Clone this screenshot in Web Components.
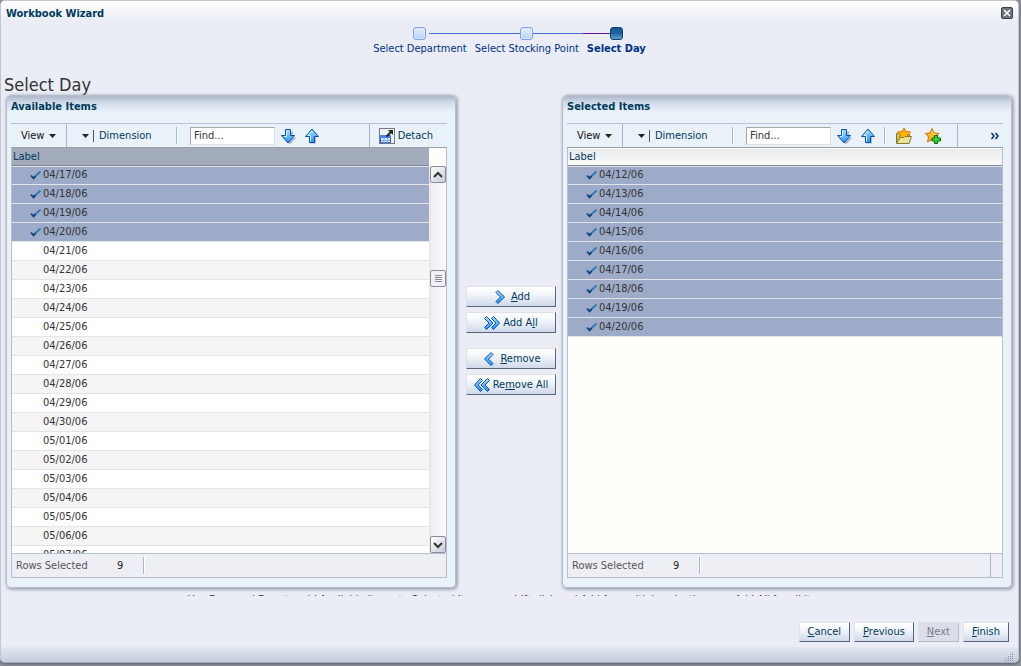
<!DOCTYPE html>
<html lang="en">
<head>
<meta charset="utf-8">
<title>Workbook Wizard</title>
<style>
  html, body { height: 100%; margin: 0; }
  body {
    background: #8e939c;
    font: 11px/14px "DejaVu Sans Condensed", "DejaVu Sans", sans-serif;
    color: #333;
    overflow: hidden;
  }
</style>
</head>
<body>
<wizard-dialog heading="Workbook Wizard" page="Select Day">
  <wizard-train slot="train">
    <wizard-step>Select Department</wizard-step>
    <wizard-step>Select Stocking Point</wizard-step>
    <wizard-step current>Select Day</wizard-step>
  </wizard-train>

  <item-panel slot="content" heading="Available Items" dates="04/17/06*,04/18/06*,04/19/06*,04/20/06*,04/21/06,04/22/06,04/23/06,04/24/06,04/25/06,04/26/06,04/27/06,04/28/06,04/29/06,04/30/06,05/01/06,05/02/06,05/03/06,05/04/06,05/05/06,05/06/06,05/07/06" scroll></item-panel>
  <shuttle-buttons slot="content"></shuttle-buttons>
  <item-panel slot="content" heading="Selected Items" dates="04/12/06*,04/13/06*,04/14/06*,04/15/06*,04/16/06*,04/17/06*,04/18/06*,04/19/06*,04/20/06*" favorites></item-panel>

  <span slot="hint">Use Drag and Drop to add Available Items to Selected Items use shift click and Add for multiple selection; use Add All for all items</span>

  <push-button slot="actions"><u>C</u>ancel</push-button>
  <push-button slot="actions"><u>P</u>revious</push-button>
  <push-button slot="actions" disabled><u>N</u>ext</push-button>
  <push-button slot="actions"><u>F</u>inish</push-button>
</wizard-dialog>

<script>
const define = (name, html, setup) => {
  const template = document.createElement('template');
  template.innerHTML = html;
  customElements.define(name, class extends HTMLElement {
    constructor() {
      super();
      this.attachShadow({ mode: 'open' }).append(template.content.cloneNode(true));
    }
    connectedCallback() {
      if (setup && !this.ready) { this.ready = true; setup(this, this.shadowRoot); }
    }
  });
};

const ICONS = {
  down: `<path d="M6 2.5h6v6h3.500L9 15.500 2.500 8.500H6z" transform="translate(1 1)" fill="#8a93a5" opacity=".6"/>
    <path d="M5.500 1.500h5v6h4L8 15 1.500 7.500h4z" fill="url(#g)" stroke="#0b4fb0"/><path d="M6.500 2.500v6h-2.500" fill="none" stroke="#d9f2ff"/>`,
  up: `<path d="M6 15.500h6v-6.500h3L9 2 3 9h3z" fill="#8a93a5" opacity=".6"/>
    <path d="M5.500 14.500h5v-6h4L8 1 1.500 8.500h4z" fill="url(#g)" stroke="#0b4fb0"/><path d="M6.500 13.500v-6h-2.500L8 3" fill="none" stroke="#d9f2ff"/>`,
  detach: `<rect x=".5" y=".5" width="15" height="15" fill="#eef3fb" stroke="#000" stroke-dasharray="1 1"/>
    <rect x="1.500" y="7.500" width="10" height="7" fill="#e8f1ff" stroke="#2d5fd0"/><path d="M1 7h11v3H1z" fill="#4f7fe8"/>
    <path d="M5 10v5M8.500 10v5M2 12.500h9" stroke="#7ba5f5"/><path d="M7.500 8.500l5-5" stroke="#222" stroke-width="2"/><path d="M9 2h5v5z" fill="#222"/>`,
  folder: `<path d="M.5 15V5.500l1.500-1h4l1.500 2h6V15z" fill="#c9bd55" stroke="#857a25"/>
    <path d="M8 0l2 3.500 4.500.5-3 3 1 4.500L8 9.500l-4.500 2L4.500 7 1.500 4 6 3.500z" fill="#ffb400" stroke="#e07a00"/>
    <path d="M.5 15.500l3.500-6h4l1-1h6.500l-2.500 7z" fill="#e9e29a" stroke="#857a25"/>`,
  star: `<path d="M7 .5l2 4.500 5 .5-3.500 3.500 1 5L7 11.500 2.500 14l1-5L.5 5.500 5 5z" fill="#ffb81c" stroke="#d96c00"/>
    <path d="M7 3l1 3 3 .5" fill="none" stroke="#ffe58a"/>
    <path d="M9.500 7.500h3v2.500h3v3h-3v2.500h-3V13H7v-3h2.500z" fill="#3fd12f" stroke="#056b05"/>`,
  right: `<path d="M4 3.500l2-2L12.500 8 6 14.500l-2-2L8.500 8z" fill="url(#g)" stroke="#0b4fb0"/>`,
  left: `<path d="M12 3.500l-2-2L3.500 8l6.500 6.500 2-2L7.500 8z" fill="url(#g)" stroke="#0b4fb0"/>`,
  rights: `<path d="M.5 3.500l2-2L9 8l-6.500 6.500-2-2L5 8zM7.500 3.500l2-2L15.500 8l-6 6.500-2-2L12 8z" fill="url(#g)" stroke="#0b4fb0"/>`,
  lefts: `<path d="M15.500 3.500l-2-2L7 8l6.500 6.500 2-2L11 8zM8.500 3.500l-2-2L.5 8l6 6.500 2-2L4 8z" fill="url(#g)" stroke="#0b4fb0"/>`,
  more: `<path d="M4.500 5L7 8l-2.500 3M8.500 5L11 8l-2.500 3" fill="none" stroke="#0a2a7a" stroke-width="1.500"/>`,
  check: `<path d="M6.500 11L13.500 4.500" fill="none" stroke="#2f78b8" stroke-width="1.800"/><path d="M4 8.500l2.500 2.800 2-2.200" fill="none" stroke="#0e4377" stroke-width="1.800"/>`,
  chevup: `<path d="M4 10l4-4 4 4" fill="none" stroke="#333" stroke-width="2"/>`,
  chevdown: `<path d="M4 6l4 4 4-4" fill="none" stroke="#333" stroke-width="2"/>`,
  grip: `<path d="M4 4.500h7M4 6.500h7M4 8.500h7M4 10.500h7" stroke="#8a8a94"/>`,
  caret: `<path d="M5 6h7L8.500 10z" fill="#222"/>`
};

define('ui-icon', `
  <style>:host { display: block; width: 16px; height: 16px; flex: none; } svg { display: block; }</style>
  <svg width="16" height="16" viewBox="0 0 16 16" aria-hidden="true"></svg>`,
  (host, root) => {
    root.querySelector('svg').innerHTML = `<defs><linearGradient id="g" x1="0" y1="0" x2="0" y2="1">
      <stop offset="0" stop-color="#a8e0ff"/><stop offset="1" stop-color="#1f93f2"/></linearGradient></defs>` + ICONS[host.getAttribute('name')];
  });

define('push-button', `
  <style>
    :host { display: block; }
    button {
      box-sizing: border-box; width: 100%; height: var(--button-height, 20px); padding: 0 8px;
      display: flex; align-items: center; justify-content: center; gap: 3px;
      font: inherit; color: #003a5c; white-space: nowrap;
      background: linear-gradient(#fff, #f4f7fb 35%, #cfd9ea);
      border: 1px solid; border-color: #dfe1e6 #59637a #59637a #dfe1e6;
    }
    button:disabled { color: #777c8c; background: #dcdfe9; border-color: #e2e4ec #b8bcc9 #b8bcc9 #e2e4ec; }
  </style>
  <button type="button"><slot name="icon"></slot><span><slot></slot></span></button>`,
  (host, root) => { root.querySelector('button').disabled = host.hasAttribute('disabled'); });

define('wizard-step', `
  <style>
    :host { display: block; --line: #4468d8; color: #003286; }
    a { display: block; color: inherit; text-decoration: none; }
    .track { display: flex; align-items: center; height: 14px; }
    .track::before, .track::after { content: ""; flex: 1; height: 1px; background: var(--line); }
    :host(:first-child) .track::before, :host(:last-child) .track::after { background: none; }
    .stop { box-sizing: border-box; width: 13px; height: 13px; border: 1px solid #7ba0f0; border-radius: 3px;
      background: linear-gradient(#e3efff, #b5d2ff); box-shadow: inset 0 0 0 1px #dbe8ff; }
    :host(:first-child) .stop { margin-right: 3px; margin-left: 3px; }
    .label { padding: 2px 4px 0; white-space: nowrap; }
    :host([current]) { font-weight: bold; --line: #6a0f86; }
    :host([current]) .stop { border-color: #14406e; background: linear-gradient(#165a9c, #1a5f9f 45%, #5ba3d3); box-shadow: none; }
  </style>
  <a href="#"><div class="track"><span class="stop"></span></div><div class="label"><slot></slot></div></a>`);

define('wizard-train', `
  <style>:host { display: block; } nav { display: flex; justify-content: center; }</style>
  <nav aria-label="Steps"><slot></slot></nav>`);

define('shuttle-buttons', `
  <style>
    :host { display: block; --button-height: 21px; }
    .stack { display: flex; flex-direction: column; justify-content: center; gap: 5px; height: 100%; padding: 0 6px 2px 10px; box-sizing: border-box; }
    .second { margin-top: 10px; }
  </style>
  <div class="stack">
    <push-button><ui-icon slot="icon" name="right"></ui-icon><u>A</u>dd</push-button>
    <push-button><ui-icon slot="icon" name="rights"></ui-icon>Add A<u>l</u>l</push-button>
    <push-button class="second"><ui-icon slot="icon" name="left"></ui-icon><u>R</u>emove</push-button>
    <push-button><ui-icon slot="icon" name="lefts"></ui-icon>Re<u>m</u>ove All</push-button>
  </div>`);

define('item-panel', `
  <style>
    :host {
      display: flex; flex-direction: column; box-sizing: border-box; min-width: 0; min-height: 0;
      padding: 4px 8px 9px 4px; border: 1px solid #b4bccf; border-radius: 5px;
      background: linear-gradient(#aeb7ca, #cfd8e6 6px, #e9f1f9 16px);
      box-shadow: 1px 1px 3px 1px #a4a9b6;
    }
    h2 { margin: 0; font-size: 11px; line-height: 14px; color: #003a5c; height: 23px; }
    button { border: 0; padding: 0; background: none; font: inherit; color: #003a5c; display: flex; align-items: center; }
    .toolbar { display: flex; align-items: center; height: 23px; flex: none; border-top: 1px solid #b9c1d6; border-bottom: 1px solid #9ba0a8; }
    .view { color: #111; padding-left: 10px; width: 55px; box-sizing: border-box; }
    .rule { width: 1px; align-self: stretch; background: #a9b6d0; }
    .short { width: 1px; height: 17px; background: #a9b6d0; border-right: 1px solid #fff; }
    .dimension { width: 109px; padding-left: 10px; box-sizing: border-box; }
    .dimension span { border-left: 1px solid #555; padding-left: 5px; line-height: 12px; }
    .find { box-sizing: border-box; width: 85px; height: 18px; margin: 0 5px 0 12px; padding: 0 3px; font: inherit; color: #333;
      border: 1px solid; border-color: #a5a5a8 #e2e2e2 #e2e2e2 #a5a5a8; border-radius: 0; background: #fff; }
    .arrow { margin-right: 8px; }
    .extra { display: none; align-items: center; gap: 13px; padding-left: 10px; }
    .tail { margin-left: auto; display: flex; align-items: center; align-self: stretch; }
    .detach { padding: 0 14px 0 9px; gap: 3px; }
    .more { display: none; padding: 0 0 0 29px; }
    .grid { flex: 1; min-height: 0; display: flex; overflow: hidden; background: #fefffa;
      border: 1px solid #bcbec6; border-top: 0; border-bottom: 0; }
    .rows { flex: 1; min-width: 0; overflow: hidden; }
    table { width: 100%; border-collapse: separate; border-spacing: 0; }
    th { box-sizing: border-box; height: 18px; padding: 0 1px; text-align: left; font-weight: normal; color: #003a5c;
      line-height: 16px; background: linear-gradient(#e8eaec, #fafafa); border-bottom: 1px solid #80868f; box-shadow: inset 0 1px #fff; }
    td { box-sizing: border-box; height: 19px; padding: 0 0 0 15px; border-bottom: 1px solid #e2e4e8; background: #fff; line-height: 16px; }
    tr:nth-child(even) td { background: #f5f5f5; }
    tbody tr[aria-selected] td { background: #9dabc9; }
    tbody tr:first-child td { box-shadow: inset 0 1px #e2e4e8; }
    .cell { display: flex; align-items: center; height: 18px; }
    .mark { width: 16px; }
    .bar { display: none; flex-direction: column; width: 17px; background: linear-gradient(90deg, #eae9e3 2px, #eeeef4 2px, #fafafc); }
    .corner { height: 18px; background: #fefffa; }
    .thumb, .step { box-sizing: border-box; margin-left: 1px; width: 16px; height: 17px; border: 1px solid #8b8d9c; border-radius: 2px; background: linear-gradient(135deg, #fff, #c9c9da); justify-content: center; overflow: hidden; }
    .thumb { background: #f2f2f6; }
    .before { flex: 88; } .after { flex: 250; }
    .status { display: flex; align-items: center; flex: none; height: 23px; color: #555; background: #eeeff5;
      border: 1px solid #bcbec6; border-top-color: #b5bfd2; padding-left: 4px; }
    .label { width: 101px; } .count { width: 26px; color: #222; }
    .end { display: none; margin: 0 11px 0 auto; }
    :host([scroll]) .bar { display: flex; }
    :host([scroll]) th { background: #a2acbd; box-shadow: none; }
    :host([favorites]) .extra, :host([favorites]) .more { display: flex; }
    :host([favorites]) .end { display: block; }
    :host([favorites]) .detach { display: none; }
  </style>
  <h2></h2>
  <div class="toolbar" role="toolbar">
    <button class="view" type="button">View<ui-icon name="caret"></ui-icon></button>
    <span class="rule"></span>
    <button class="dimension" type="button"><ui-icon name="caret"></ui-icon><span>Dimension</span></button>
    <span class="short"></span>
    <input class="find" type="text" value="Find..." aria-label="Find">
    <button class="arrow" type="button" aria-label="Find next"><ui-icon name="down"></ui-icon></button>
    <button class="arrow" type="button" aria-label="Find previous"><ui-icon name="up"></ui-icon></button>
    <div class="extra">
      <button type="button" aria-label="Open favorites"><ui-icon name="folder"></ui-icon></button>
      <button type="button" aria-label="Add favorite"><ui-icon name="star"></ui-icon></button>
    </div>
    <div class="tail">
      <span class="rule"></span>
      <button class="detach" type="button"><ui-icon name="detach"></ui-icon>Detach</button>
      <button class="more" type="button" aria-label="More"><ui-icon name="more"></ui-icon></button>
    </div>
  </div>
  <div class="grid">
    <div class="rows"><table><thead><tr><th scope="col">Label</th></tr></thead><tbody></tbody></table></div>
    <div class="bar">
      <div class="corner"></div>
      <button class="step" type="button" aria-label="Scroll up"><ui-icon name="chevup"></ui-icon></button>
      <div class="before"></div>
      <div class="thumb"><ui-icon name="grip"></ui-icon></div>
      <div class="after"></div>
      <button class="step" type="button" aria-label="Scroll down"><ui-icon name="chevdown"></ui-icon></button>
    </div>
  </div>
  <div class="status"><span class="label">Rows Selected</span><span class="count">9</span><span class="short"></span><span class="rule end"></span></div>`,
  (host, root) => {
    root.querySelector('h2').textContent = host.getAttribute('heading');
    if (host.hasAttribute('favorites')) {
      const rule = document.createElement('span');
      rule.className = 'short';
      root.querySelector('.extra').before(rule);
    }
    const body = root.querySelector('tbody');
    for (const entry of host.getAttribute('dates').split(',')) {
      const selected = entry.endsWith('*');
      const row = body.insertRow();
      if (selected) row.setAttribute('aria-selected', 'true');
      row.innerHTML = `<td><div class="cell"><span class="mark">${selected ? '<ui-icon name="check"></ui-icon>' : ''}</span>${entry.replace('*', '')}</div></td>`;
    }
  });

define('wizard-dialog', `
  <style>
    :host { display: block; height: 100%; box-sizing: border-box; padding: 0 2px 3px 0; }
    .frame { display: flex; flex-direction: column; height: 100%; box-sizing: border-box;
      border: 1px solid #c3c4d4; border-bottom-color: #a5abba; border-radius: 5px; background: #eaedf5; box-shadow: 0 1px 3px #555b66; overflow: hidden; }
    header { display: flex; justify-content: space-between; flex: none; height: 19px; padding: 6px 5px 0; background: linear-gradient(#fff, #eaedf5 20px); }
    h1 { margin: 0; font-size: 11px; line-height: 14px; color: #003a5c; }
    .close { width: 12px; height: 12px; padding: 0; border: 1px solid #3d4148; border-radius: 2px; background: #6d737e; display: block; box-sizing: border-box; }
    .close svg { display: block; }
    .title { margin: 19px 3px 0; font-size: 18px; line-height: 20px; font-weight: normal; color: #333; }
    main { flex: 1; min-height: 0; display: grid; grid-template-columns: 1fr 106px 1fr; grid-template-rows: minmax(0, 1fr); padding: 0 6px 0 5px; }
    .hint { height: 8px; flex: none; overflow: hidden; text-align: center; line-height: 14px; white-space: nowrap; padding-top: 5px; box-sizing: border-box; }
    .actions { display: flex; justify-content: flex-end; gap: 4px; padding: 26px 9px 5px; flex: none; }
    footer { flex: none; height: 15px; background: linear-gradient(#e3e8f1, #c3ccde); display: flex; justify-content: flex-end; align-items: flex-end; padding: 0 4px 0; }
  </style>
  <div class="frame" role="dialog">
    <header><h1></h1><button class="close" type="button" aria-label="Close"><svg width="10" height="10" viewBox="0 0 10 10" aria-hidden="true"><path d="M2 2l6 6M8 2L2 8" stroke="#fff" stroke-width="1.500"/></svg></button></header>
    <slot name="train"></slot>
    <h2 class="title"></h2>
    <main><slot name="content"></slot></main>
    <div class="hint"><slot name="hint"></slot></div>
    <div class="actions"><slot name="actions"></slot></div>
    <footer><svg width="10" height="10" viewBox="0 0 10 10" aria-hidden="true"><path d="M8 .5h1M6 2.500h1m1 0h1M4 4.500h1m1 0h1m1 0h1M2 6.500h1m1 0h1m1 0h1m1 0h1M0 8.500h1m1 0h1m1 0h1m1 0h1m1 0h1" stroke="#8a909e"/></svg></footer>
  </div>`,
  (host, root) => {
    root.querySelector('h1').textContent = host.getAttribute('heading');
    root.querySelector('.title').textContent = host.getAttribute('page');
  });
</script>
</body>
</html>
